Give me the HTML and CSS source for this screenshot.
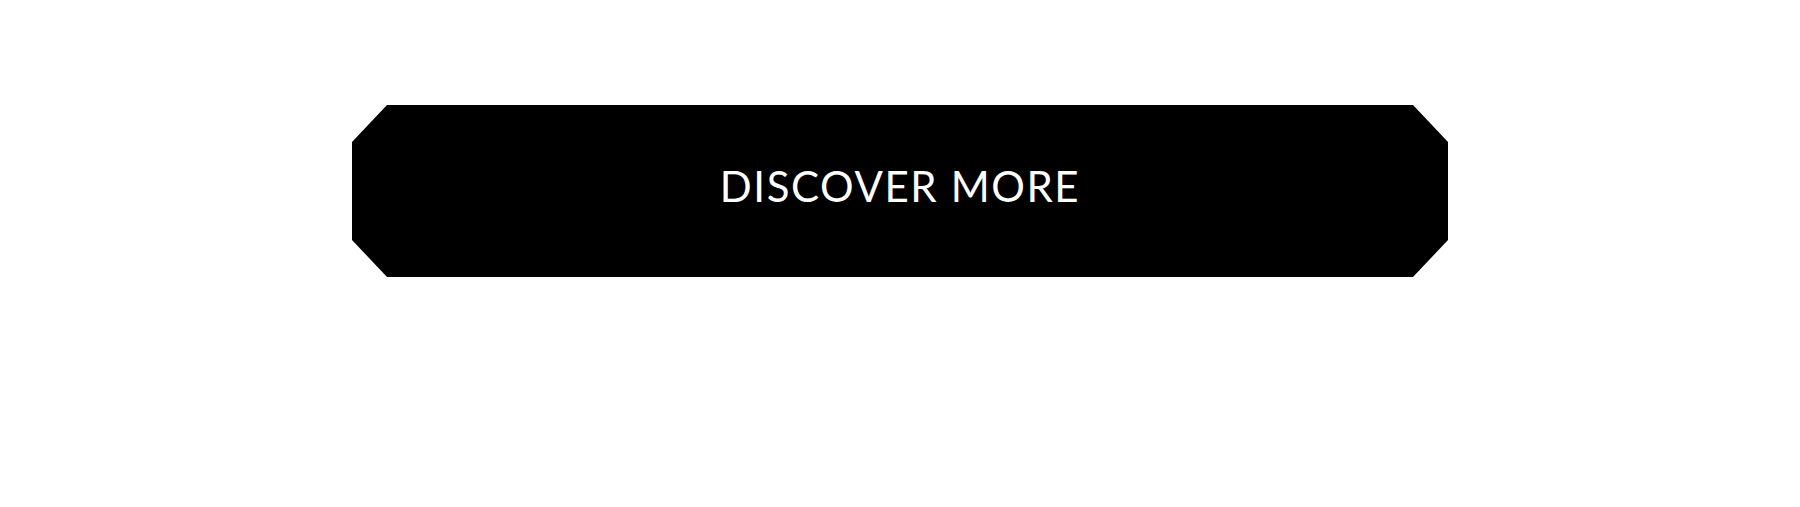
FILE: index.html
```html
<!DOCTYPE html>
<html lang="en">

<head>
    <meta charset="UTF-8">
    <meta name="viewport" content="width=device-width, initial-scale=1.0">
    <title>Discover More</title>
    <link rel="stylesheet" href="styles.css">
</head>

<body>
    <div class="cta-container">
        <a href="#" class="discover-btn">Discover More</a>
    </div>
</body>

</html>
```
FILE: styles.css
```css
body {
    font-family: 'Lato', 'Open Sans', sans-serif;
    background-color: #fff;
    margin: 0;
}

.cta-container {
    display: flex;
    justify-content: center;
    padding-top: 105px;
}

.discover-btn {
    display: flex;
    align-items: center;
    justify-content: center;
    width: 1096px;
    height: 172px;
    padding-bottom: 10px;
    box-sizing: border-box;
    background-color: #000;
    color: #fff;
    font-size: 42px;
    font-weight: 400;
    letter-spacing: 1.6px;
    text-transform: uppercase;
    text-decoration: none;
    clip-path: polygon(35px 0, calc(100% - 35px) 0, 100% 37px, 100% calc(100% - 37px), calc(100% - 35px) 100%, 35px 100%, 0 calc(100% - 37px), 0 37px);
}
```
